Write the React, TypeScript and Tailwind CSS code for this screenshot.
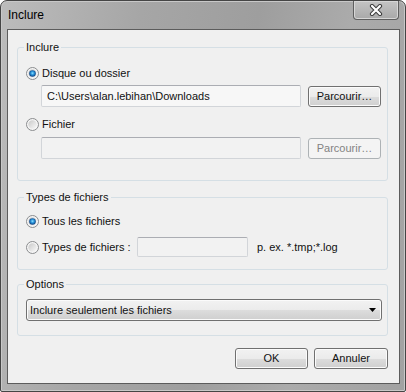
import React from 'react';

const btnFace =
  'bg-[linear-gradient(to_bottom,#f2f2f2_0%,#ebebeb_50%,#dddddd_50%,#cfcfcf_100%)] border border-[#707070] rounded-[3px] shadow-[inset_0_0_0_1px_#fbfbfb]';

function Radio({ id, checked, label }: { id: string; checked?: boolean; label: string }) {
  return (
    <div className="flex h-[13px] items-center">
      <svg width="13" height="13" viewBox="0 0 13 13" className="shrink-0">
        <defs>
          <linearGradient id={`${id}-ring`} x1="0" y1="0" x2="1" y2="1">
            <stop offset="0" stopColor="#c9c9c9" />
            <stop offset="1" stopColor="#f9f9f9" />
          </linearGradient>
          <radialGradient id={`${id}-dot`} cx="0.5" cy="0.45" r="0.55">
            <stop offset="0" stopColor="#8fe1ff" />
            <stop offset="0.45" stopColor="#2a95dc" />
            <stop offset="1" stopColor="#0b3a78" />
          </radialGradient>
        </defs>
        <circle cx="6.5" cy="6.5" r="6" fill="#f5f5f5" stroke="#8a8c8e" />
        <circle cx="6.5" cy="6.5" r="4.2" fill={`url(#${id}-ring)`} />
        {checked && <circle cx="6.5" cy="6.5" r="3.3" fill={`url(#${id}-dot)`} />}
      </svg>
      <span className="ml-[3px] leading-[13px]">{label}</span>
    </div>
  );
}

function Button({ children, disabled, className = '' }: { children: React.ReactNode; disabled?: boolean; className?: string }) {
  return (
    <button
      type="button"
      className={
        disabled
          ? `flex h-[21px] items-center justify-center rounded-[3px] border border-[#adb2b5] bg-[#f4f4f4] text-[#838383] ${className}`
          : `flex h-[21px] items-center justify-center ${btnFace} ${className}`
      }
    >
      {children}
    </button>
  );
}

function TextBox({ value, className = '' }: { value?: string; className?: string }) {
  return (
    <div
      className={`flex items-center rounded-[2px] border border-[#d2d5d9] border-t-[#abadb3] bg-[#f2f2f2] pl-[5px] ${className}`}
    >
      {value}
    </div>
  );
}

function Group({ title, className = '', children }: { title: string; className?: string; children: React.ReactNode }) {
  return (
    <fieldset className={`rounded-[3px] border border-[#d5dfe5] ${className}`}>
      <legend className="ml-[6px] px-[2px] leading-[13px]">{title}</legend>
      {children}
    </fieldset>
  );
}

export default function App() {
  return (
    <div className="h-[392px] w-[406px] font-['Liberation_Sans',Arial,sans-serif] text-[11px] text-[#111]">
      <div className="flex h-full flex-col rounded-t-[7px] rounded-b-[2px] border border-[#454545] bg-[linear-gradient(100deg,#bcbcbc_0%,#a6a6a6_30%,#9e9e9e_55%,#ababab_75%,#a2a2a2_100%)] shadow-[inset_0_0_0_1px_#c8c8c8]">
        {/* title bar */}
        <div className="flex h-[28px] items-start justify-between">
          <span className="ml-[7px] mt-[7px] text-[12px] leading-[15px] text-black">Inclure</span>
          <div className="mr-[6px] flex h-[19px] w-[46px] items-center justify-center rounded-b-[4px] border border-t-0 border-[#5f5f5f] bg-[linear-gradient(to_bottom,#c4c4c4,#a9a9a9)] shadow-[inset_0_0_0_1px_#d6d6d6]">
            <svg width="14" height="12" viewBox="0 0 14 12">
              <path d="M3 2 L11 10 M11 2 L3 10" stroke="#3c3c3c" strokeWidth="4.2" strokeLinecap="round" />
              <path d="M3 2 L11 10 M11 2 L3 10" stroke="#ffffff" strokeWidth="2.2" strokeLinecap="round" />
            </svg>
          </div>
        </div>

        {/* client area */}
        <div className="mb-[7px] ml-[6px] mr-[5px] flex flex-1 flex-col border border-[#5c5c5c] bg-[#f0f0f0] pl-[9px] pr-[11px] pt-[11px]">
          <Group title="Inclure">
            <div className="flex flex-col pb-[21px] pl-[8px] pt-[13px]">
              <Radio id="r1" checked label="Disque ou dossier" />
              <div className="ml-[15px] mt-[5px] flex items-start">
                <TextBox value="C:\Users\alan.lebihan\Downloads" className="h-[22px] w-[260px] bg-[#f7f7f7]" />
                <Button className="ml-[7px] mt-[1px] w-[73px]">Parcourir…</Button>
              </div>
              <div className="mt-[11px]">
                <Radio id="r2" label="Fichier" />
              </div>
              <div className="ml-[15px] mt-[6px] flex items-start">
                <TextBox className="h-[22px] w-[260px]" />
                <Button disabled className="ml-[7px] mt-[1px] w-[73px]">Parcourir…</Button>
              </div>
            </div>
          </Group>

          <Group title="Types de fichiers" className="mt-[10px]">
            <div className="flex flex-col pb-[12px] pl-[8px] pt-[11px]">
              <Radio id="r3" checked label="Tous les fichiers" />
              <div className="mt-[9px] flex h-[20px] items-center">
                <div className="w-[111px]">
                  <Radio id="r4" label="Types de fichiers :" />
                </div>
                <TextBox className="h-[20px] w-[111px]" />
                <span className="ml-[9px]">p. ex. *.tmp;*.log</span>
              </div>
            </div>
          </Group>

          <Group title="Options" className="mt-[8px]">
            <div className="pb-[14px] pl-[8px] pt-[8px]">
              <div className={`flex h-[22px] w-[356px] items-center justify-between pl-[3px] pr-[5px] ${btnFace}`}>
                <span>Inclure seulement les fichiers</span>
                <svg width="7" height="4" viewBox="0 0 7 4">
                  <polygon points="0,0 7,0 3.5,4" fill="#000" />
                </svg>
              </div>
            </div>
          </Group>

          <div className="mt-[12px] flex justify-end gap-[6px]">
            <Button className="w-[73px]">OK</Button>
            <Button className="w-[74px]">Annuler</Button>
          </div>
        </div>
      </div>
    </div>
  );
}
